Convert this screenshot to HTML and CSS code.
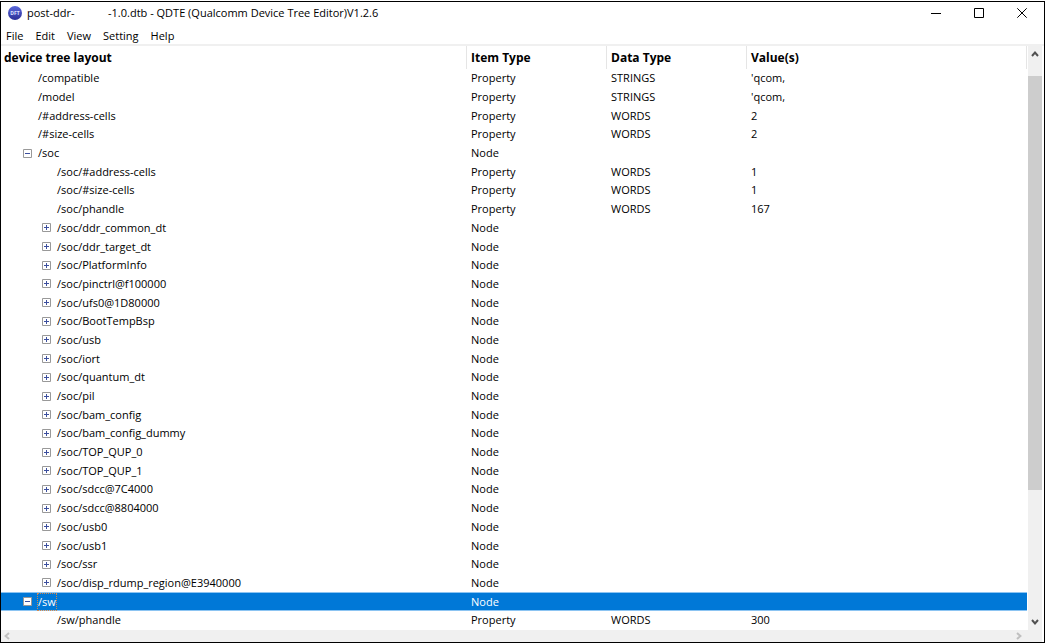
FILE: index.html
```
<!DOCTYPE html>
<html lang="en">
<head>
    <meta charset="UTF-8">
    <meta name="viewport" content="width=device-width, initial-scale=1.0">
    <title>QDTE (Qualcomm Device Tree Editor)V1.2.6</title>
    <link rel="stylesheet" href="styles.css">
    <script src="tree.js" defer></script>
</head>
<body>
    <div class="window">
        <header class="title-bar">
            <svg class="app-icon" viewBox="0 0 14 14" aria-hidden="true">
                <defs>
                    <linearGradient id="ball" x1="0" y1="0" x2="0" y2="1">
                        <stop offset="0" stop-color="#5a68dc"/>
                        <stop offset="1" stop-color="#2c2f96"/>
                    </linearGradient>
                </defs>
                <circle cx="7" cy="7" r="7" fill="url(#ball)"/>
                <text x="7" y="9" text-anchor="middle">DFT</text>
            </svg>
            <h1 class="title"><span class="file-prefix">post-ddr-</span><span>-1.0.dtb - QDTE (Qualcomm Device Tree Editor)V1.2.6</span></h1>
            <div class="window-buttons">
                <button type="button" aria-label="Minimize"><svg viewBox="0 0 10 10"><path d="M0 5.5h10"/></svg></button>
                <button type="button" aria-label="Maximize"><svg viewBox="0 0 10 10"><path d="M.5.5h9v9h-9z"/></svg></button>
                <button type="button" aria-label="Close"><svg viewBox="0 0 10 10"><path d="M.3.3l9.4 9.4M9.7.3L.3 9.7"/></svg></button>
            </div>
        </header>

        <nav class="menu-bar">
            <button type="button">File</button>
            <button type="button">Edit</button>
            <button type="button">View</button>
            <button type="button">Setting</button>
            <button type="button">Help</button>
        </nav>

        <main class="tree-view">
            <table class="tree">
                <colgroup>
                    <col class="col-name">
                    <col class="col-type">
                    <col class="col-type">
                    <col>
                </colgroup>
                <thead>
                    <tr><th>device tree layout</th><th>Item Type</th><th>Data Type</th><th>Value(s)</th></tr>
                </thead>
                <tbody id="tree-rows"></tbody>
            </table>
            <div class="scroll-y">
                <button type="button" aria-label="Scroll up"><svg viewBox="0 0 8 6"><path d="M1 5l3-3.4L7 5"/></svg></button>
                <div class="track">
                    <div class="space-above"></div>
                    <div class="thumb"></div>
                    <div class="space-below"></div>
                </div>
                <button type="button" aria-label="Scroll down"><svg viewBox="0 0 8 6"><path d="M1 1l3 3.4L7 1"/></svg></button>
            </div>
            <div class="scroll-x">
                <button type="button" aria-label="Scroll left" disabled><svg viewBox="0 0 6 8"><path d="M5 1L1.6 4 5 7"/></svg></button>
                <button type="button" aria-label="Scroll right" disabled><svg viewBox="0 0 6 8"><path d="M1 1l3.4 3L1 7"/></svg></button>
            </div>
        </main>
    </div>
</body>
</html>
```
FILE: styles.css
```
* {
    box-sizing: border-box;
}
body {
    margin: 0;
    padding-top: 1px;
    height: 100vh;
    background-color: #fff;
    color: #000;
    font-family: "Open Sans", "Noto Sans", sans-serif;
    font-size: 11px;
    line-height: 16px;
}
button {
    margin: 0;
    padding: 0;
    border: none;
    background: none;
    color: inherit;
    font: inherit;
}
svg {
    display: block;
    fill: none;
    stroke: currentColor;
}
.window {
    display: flex;
    flex-direction: column;
    height: 100%;
    border: 1px solid #000;
}

/* title bar */
.title-bar {
    display: flex;
    align-items: center;
    height: 22px;
    padding-left: 7px;
}
.app-icon {
    width: 14px;
    height: 14px;
    margin-right: 5px;
    stroke: none;
}
.app-icon text {
    fill: #dfe2ff;
    font-size: 5px;
    font-weight: bold;
}
.title {
    display: flex;
    flex: 1;
    margin: 0;
    font-size: 11px;
    font-weight: normal;
    white-space: nowrap;
}
.file-prefix {
    width: 81px;
}
.window-buttons {
    display: flex;
    padding-right: 1px;
}
.window-buttons button {
    display: flex;
    align-items: center;
    justify-content: center;
    width: 43px;
    height: 22px;
}
.window-buttons svg {
    width: 10px;
    height: 10px;
}

/* menu */
.menu-bar {
    display: flex;
    gap: 12px;
    height: 22px;
    padding: 4px 5px 0;
    border-bottom: 2px solid #f0f0f0;
}
.menu-bar button {
    line-height: 16px;
}

/* tree table */
.tree-view {
    display: grid;
    flex: 1;
    grid-template-columns: 1fr 14px;
    grid-template-rows: 1fr 12px;
    min-height: 0;
    padding-right: 2px;
}
.tree {
    width: 100%;
    height: 100%;
    padding-right: 1px;
    table-layout: fixed;
    border-spacing: 0;
}
.col-name {
    width: 466px;
}
.col-type {
    width: 140px;
}
.tree th,
.tree td {
    padding: 0 4px;
    text-align: left;
    white-space: nowrap;
}
.tree th {
    height: 23px;
    padding-top: 1px;
    border-right: 1px solid #e5e5e5;
    font-size: 12px;
    line-height: 20px;
}
.tree th:first-child {
    padding-left: 3px;
}
.item {
    display: flex;
    align-items: center;
    padding-left: 14px;
}
.level-2 .item {
    padding-left: 33px;
}
.toggle {
    display: flex;
    width: 19px;
    padding-left: 4px;
}
.toggle svg {
    width: 9px;
    height: 9px;
    stroke: #999;
}
.toggle .sign {
    stroke: #3c4f9e;
}
.selected td {
    background-color: #0078d7;
    box-shadow: inset 0 1px #8cc4f2, inset 0 -1px #8cc4f2;
    color: #fff;
}
.selected .item span:last-child {
    outline: 1px dotted #d08a50;
}

/* scroll bars */
.scroll-y {
    display: flex;
    flex-direction: column;
    background-color: #f0f0f0;
}
.scroll-y button {
    display: flex;
    align-items: center;
    justify-content: center;
    height: 16px;
    color: #505050;
}
.scroll-y svg {
    width: 8px;
    height: 6px;
    stroke-width: 2;
}
.track {
    display: flex;
    flex: 1;
    flex-direction: column;
}
.space-above {
    flex: 14;
}
.thumb {
    flex: 414;
    background-color: #cdcdcd;
}
.space-below {
    flex: 124;
}
.scroll-x {
    display: flex;
    grid-column: 1 / -1;
    align-items: center;
    justify-content: space-between;
    padding: 0 20px 0 3px;
    background-color: #f0f0f0;
    color: #bfbfbf;
}
.scroll-x svg {
    width: 6px;
    height: 8px;
    stroke-width: 2;
}
```
FILE: tree.js
```
// name, level, item type, data type, value, state
const rows = [
    ['/compatible', 1, 'Property', 'STRINGS', "'qcom,"],
    ['/model', 1, 'Property', 'STRINGS', "'qcom,"],
    ['/#address-cells', 1, 'Property', 'WORDS', '2'],
    ['/#size-cells', 1, 'Property', 'WORDS', '2'],
    ['/soc', 1, 'Node', '', '', 'open'],
    ['/soc/#address-cells', 2, 'Property', 'WORDS', '1'],
    ['/soc/#size-cells', 2, 'Property', 'WORDS', '1'],
    ['/soc/phandle', 2, 'Property', 'WORDS', '167'],
    ['/soc/ddr_common_dt', 2, 'Node', '', '', 'closed'],
    ['/soc/ddr_target_dt', 2, 'Node', '', '', 'closed'],
    ['/soc/PlatformInfo', 2, 'Node', '', '', 'closed'],
    ['/soc/pinctrl@f100000', 2, 'Node', '', '', 'closed'],
    ['/soc/ufs0@1D80000', 2, 'Node', '', '', 'closed'],
    ['/soc/BootTempBsp', 2, 'Node', '', '', 'closed'],
    ['/soc/usb', 2, 'Node', '', '', 'closed'],
    ['/soc/iort', 2, 'Node', '', '', 'closed'],
    ['/soc/quantum_dt', 2, 'Node', '', '', 'closed'],
    ['/soc/pil', 2, 'Node', '', '', 'closed'],
    ['/soc/bam_config', 2, 'Node', '', '', 'closed'],
    ['/soc/bam_config_dummy', 2, 'Node', '', '', 'closed'],
    ['/soc/TOP_QUP_0', 2, 'Node', '', '', 'closed'],
    ['/soc/TOP_QUP_1', 2, 'Node', '', '', 'closed'],
    ['/soc/sdcc@7C4000', 2, 'Node', '', '', 'closed'],
    ['/soc/sdcc@8804000', 2, 'Node', '', '', 'closed'],
    ['/soc/usb0', 2, 'Node', '', '', 'closed'],
    ['/soc/usb1', 2, 'Node', '', '', 'closed'],
    ['/soc/ssr', 2, 'Node', '', '', 'closed'],
    ['/soc/disp_rdump_region@E3940000', 2, 'Node', '', '', 'closed'],
    ['/sw', 1, 'Node', '', '', 'open'],
    ['/sw/phandle', 2, 'Property', 'WORDS', '300']
];

function toggle(state) {
    if (!state) return '<span class="toggle"></span>';
    const sign = state === 'open' ? 'M2 4.5h5' : 'M2 4.5h5M4.5 2v5';
    const label = state === 'open' ? 'Collapse' : 'Expand';
    return `<button type="button" class="toggle" aria-label="${label}">
        <svg viewBox="0 0 9 9"><path fill="#fff" d="M.5.5h8v8h-8z"/><path class="sign" d="${sign}"/></svg>
    </button>`;
}

document.getElementById('tree-rows').innerHTML = rows.map(([name, level, item, data, value, state]) => `
    <tr class="level-${level}${name === '/sw' ? ' selected' : ''}">
        <td><div class="item">${toggle(state)}<span>${name}</span></div></td>
        <td>${item}</td>
        <td>${data}</td>
        <td>${value}</td>
    </tr>`).join('');
```
